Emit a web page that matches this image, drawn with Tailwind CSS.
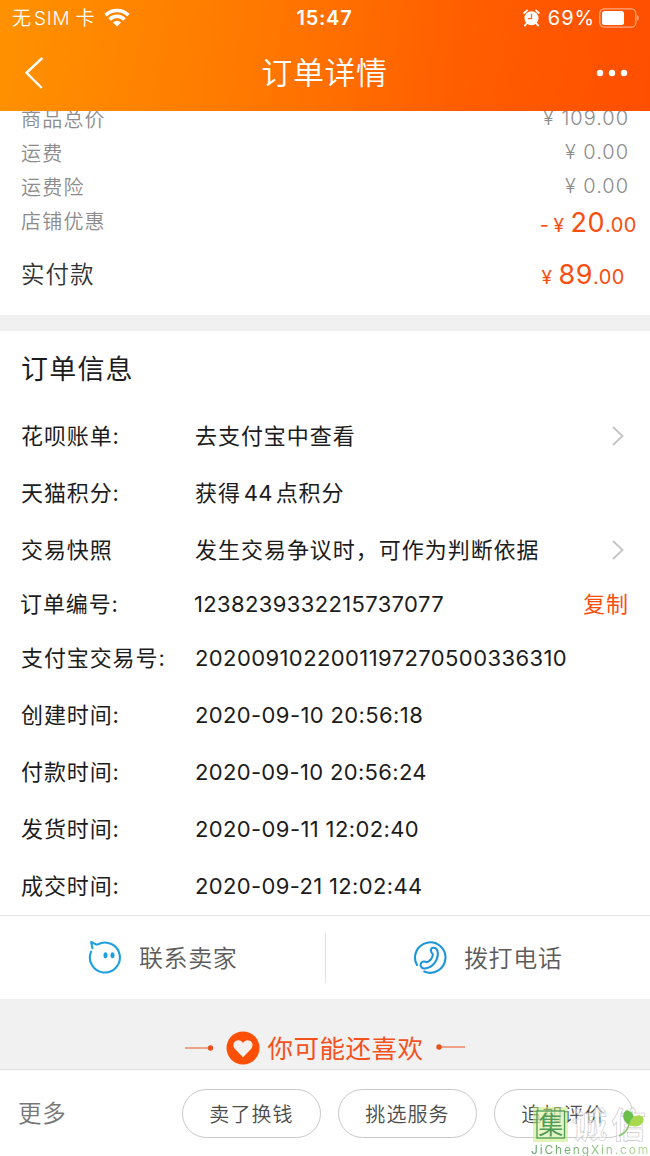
<!DOCTYPE html>
<html lang="zh-CN">
<head>
    <meta charset="UTF-8">
    <meta name="viewport" content="width=device-width, initial-scale=1.0">
    <title>订单详情</title>
    <script src="https://cdn.jsdelivr.net/npm/@tailwindcss/browser@4"></script>
</head>
<body class="bg-white font-['Inter','Noto_Sans_CJK_SC',sans-serif] text-[#1c1c1c]">
    <div class="relative flex h-[1156px] w-[650px] flex-col overflow-hidden bg-white whitespace-nowrap">
        <!-- Header -->
        <header class="h-[111px] shrink-0 bg-linear-[98deg,#ff9200_0%,#ff7400_45%,#ff5e00_70%,#ff4e00_100%] text-white">
            <div class="grid h-[35px] grid-cols-3 items-center pr-[11px] pl-3">
                <div class="flex items-center">
                    <span class="pt-[3px] text-[19px] font-[350]">无<span class="mx-[3px] tracking-[0.8px]">SIM</span><span class="ml-[2px]">卡</span></span>
                    <svg class="ml-[9px] h-[19px] w-[26px]" viewBox="0 0 26 19" fill="none" stroke="#fff" stroke-width="3.6">
                        <path d="M1.6 7.2a16.2 16.2 0 0 1 22.8 0"/>
                        <path d="M5.6 11.4a10.4 10.4 0 0 1 14.8 0"/>
                        <path d="M13 18.4l-4-4a5.7 5.7 0 0 1 8 0z" fill="#fff" stroke="none"/>
                    </svg>
                </div>
                <span class="pr-[2px] text-center text-[20px] font-semibold tracking-[0.7px]">15:47</span>
                <div class="flex items-center justify-end">
                    <svg class="mr-[8px] h-[18px] w-[17px]" viewBox="0 0 17 18">
                        <circle cx="8.5" cy="9.2" r="7" fill="#fff"/>
                        <path d="M1.2 4L4 1.4M15.800 4L13 1.4M3.600 14.500L1.800 16.600M13.400 14.500L15.200 16.600" stroke="#fff" stroke-width="1.800" stroke-linecap="round"/>
                        <path d="M8.500 4.800V9.600H5" fill="none" stroke="#ff6a1c" stroke-width="1.300"/>
                    </svg>
                    <span class="mr-[3px] text-[20px] tracking-[0.9px]">69%</span>
                    <svg class="h-5 w-[41px]" viewBox="0 0 41 20">
                        <rect x="1.800" y="0.800" width="36" height="18.400" rx="4.500" fill="none" stroke="#fff" stroke-opacity=".5" stroke-width="1.300"/>
                        <rect x="4" y="3" width="22" height="14" rx="2.500" fill="#fff"/>
                        <path d="M39.300 7v6c1.800-.8 1.800-5.200 0-6z" fill="#fff" fill-opacity=".6"/>
                    </svg>
                </div>
            </div>
            <div class="grid h-[76px] grid-cols-3 items-center pr-[22px] pl-6">
                <svg class="h-8 w-5" viewBox="0 0 20 32" fill="none" stroke="#fff" stroke-width="2.400">
                    <path d="M18.300 1L2.500 15.800L17.800 31"/>
                </svg>
                <h1 class="pr-[3px] text-center text-[31px] font-[350] tracking-[0.6px]">订单详情</h1>
                <svg class="h-2 w-8 justify-self-end" viewBox="0 0 32 8" fill="#fff">
                    <circle cx="4" cy="4" r="3.200"/>
                    <circle cx="16" cy="4" r="3.200"/>
                    <circle cx="28" cy="4" r="3.200"/>
                </svg>
            </div>
        </header>

        <!-- Price summary -->
        <section class="h-[204px] shrink-0 overflow-hidden pl-[21px] text-[20px] font-[350] text-[#8c8c8c]">
            <div class="-mt-[9px] flex h-[34px] items-center justify-between pr-[21px]">
                <span class="pt-px tracking-[1.2px]">商品总价</span>
                <span class="pb-[2px] tracking-[1px]">¥ 109.00</span>
            </div>
            <div class="flex h-[34px] items-center justify-between pr-[21px]">
                <span class="pt-px tracking-[1.2px]">运费</span>
                <span class="pb-[2px] tracking-[1px]">¥ 0.00</span>
            </div>
            <div class="flex h-[34px] items-center justify-between pr-[21px]">
                <span class="pt-px tracking-[1.2px]">运费险</span>
                <span class="pb-[2px] tracking-[1px]">¥ 0.00</span>
            </div>
            <div class="flex h-[34px] items-center justify-between pr-[13px]">
                <span class="pt-px tracking-[1.2px]">店铺优惠</span>
                <span class="pt-[5px] text-[20px] font-normal tracking-[0.5px] text-[#fa4e10]">-<span class="ml-1 text-[19px]">¥</span> <span class="text-[27px]">20</span>.00</span>
            </div>
            <div class="mt-[19px] flex h-[34px] items-center justify-between pr-[25px]">
                <span class="pt-[2px] text-[23.5px] tracking-[1px] text-[#333]">实付款</span>
                <span class="pt-[2px] text-[20px] font-normal tracking-[0.5px] text-[#fa4e10]"><span class="text-[19px]">¥</span> <span class="text-[27px]">89</span>.00</span>
            </div>
        </section>

        <div class="h-4 shrink-0 bg-[#f0f0f0]"></div>

        <!-- Order info -->
        <section class="h-[584px] shrink-0 pl-[21px] text-[22px]">
            <h2 class="flex h-[77px] items-center pt-px text-[27px] tracking-[1.2px]">订单信息</h2>
            <div class="flex h-[57px] items-center">
                <span class="w-[174px] tracking-[0.9px]">花呗账单:</span>
                <span class="flex-1 tracking-[0.95px]">去支付宝中查看</span>
                <svg class="mr-[26px] mb-[2px] h-5 w-3" viewBox="0 0 12 20" fill="none" stroke="#c4c4c4" stroke-width="1.800">
                    <path d="M1 1L10.500 10L1 19"/>
                </svg>
            </div>
            <div class="flex h-[57px] items-center">
                <span class="w-[174px] tracking-[0.9px]">天猫积分:</span>
                <span class="tracking-[0.9px]">获得<span class="mx-[3px] tracking-[0.2px]">44</span>点积分</span>
            </div>
            <div class="flex h-[57px] items-center">
                <span class="w-[174px] tracking-[0.9px]">交易快照</span>
                <span class="flex-1 tracking-[0.97px]">发生交易争议时，可作为判断依据</span>
                <svg class="mr-[26px] mb-[2px] h-5 w-3" viewBox="0 0 12 20" fill="none" stroke="#c4c4c4" stroke-width="1.800">
                    <path d="M1 1L10.500 10L1 19"/>
                </svg>
            </div>
            <div class="-ml-px flex h-[51px] items-center">
                <span class="w-[174px] tracking-[0.9px]">订单编号:</span>
                <span class="flex-1 tracking-[0.36px]">1238239332215737077</span>
                <span class="mr-[21px] tracking-[0.9px] text-[#fa4e10]">复制</span>
            </div>
            <div class="flex h-[57px] items-center">
                <span class="w-[174px] tracking-[0.9px]">支付宝交易号:</span>
                <span class="tracking-[0.4px]">2020091022001197270500336310</span>
            </div>
            <div class="flex h-[57px] items-center">
                <span class="w-[174px] tracking-[0.9px]">创建时间:</span>
                <span class="tracking-[0.38px]">2020-09-10 20:56:18</span>
            </div>
            <div class="flex h-[57px] items-center">
                <span class="w-[174px] tracking-[0.9px]">付款时间:</span>
                <span class="tracking-[0.33px]">2020-09-10 20:56:24</span>
            </div>
            <div class="flex h-[57px] items-center">
                <span class="w-[174px] tracking-[0.9px]">发货时间:</span>
                <span class="tracking-[0.38px]">2020-09-11 12:02:40</span>
            </div>
            <div class="flex h-[57px] items-center">
                <span class="w-[174px] tracking-[0.9px]">成交时间:</span>
                <span class="tracking-[0.35px]">2020-09-21 12:02:44</span>
            </div>
        </section>

        <!-- Contact -->
        <section class="flex h-[84px] shrink-0 items-center border-t border-[#e2e2e2] text-[24px] text-[#5c5c5c]">
            <div class="flex flex-1 items-center pl-[88px]">
                <svg class="mb-[2px] h-[34px] w-[34px]" viewBox="0 0 34 34" fill="none" stroke="#1e9fe0" stroke-width="2.100" stroke-linecap="round" stroke-linejoin="round">
                    <path d="M3.100 11.600A15 15 0 1 0 10 4.200L8.500 4.600L3.100 2L4.500 8.200"/>
                    <ellipse cx="17.500" cy="15.300" rx="2" ry="3" fill="#1e9fe0" stroke="none"/>
                    <ellipse cx="24.500" cy="15.300" rx="2" ry="3" fill="#1e9fe0" stroke="none"/>
                </svg>
                <span class="ml-[17px] pt-[2px] font-[350] tracking-[0.6px]">联系卖家</span>
            </div>
            <div class="h-[50px] w-px bg-[#e2e2e2]"></div>
            <div class="flex flex-1 items-center pl-[87px]">
                <svg class="mb-[2px] h-[34px] w-[34px]" viewBox="0 0 34 34" fill="none" stroke="#1e95d8" stroke-width="2.100" stroke-linecap="round" stroke-linejoin="round">
                    <path d="M4 25A15.200 15.200 0 1 1 11.200 31.500"/>
                    <path d="M17.900 10.300C17.500 7.300 22.600 6.500 24.200 10C26.400 16.600 22.100 26.500 13.100 28.300C9.100 29.200 6.900 26.500 7.800 23.700C8.800 21 12 21.200 13.900 22.200C16.800 21 19.400 18.300 19.900 14.300C18.700 13.500 18.100 12.200 17.900 10.300Z"/>
                </svg>
                <span class="ml-[17px] pt-[2px] font-[350] tracking-[0.6px]">拨打电话</span>
            </div>
        </section>

        <!-- Recommendations -->
        <section class="flex h-[70px] shrink-0 items-center justify-center bg-[#f1f1f1] pt-[27px]">
            <svg class="h-2 w-[30px]" viewBox="0 0 30 8" fill="#e8501e">
                <path d="M1 3.500h26v1H1z"/>
                <circle cx="26.500" cy="4" r="2.700"/>
            </svg>
            <svg class="ml-3 h-[34px] w-[34px]" viewBox="0 0 34 34">
                <circle cx="17" cy="17" r="16.500" fill="#ff4f05"/>
                <path d="M17 26.200L9 18C6.500 15.300 7.200 11.500 9.600 10C12.500 8.200 15.500 9.400 17 12C18.500 9.400 21.500 8.200 24.400 10C26.800 11.500 27.500 15.300 25 18Z" fill="#f6f1ee"/>
            </svg>
            <span class="ml-[7px] pt-[3px] text-[25.500px] tracking-[0.5px] text-[#f4511e]">你可能还喜欢</span>
            <svg class="ml-[12px] h-2 w-[30px]" viewBox="0 0 30 8" fill="#e8501e">
                <path d="M3 2.500h26v1H3z"/>
                <circle cx="3" cy="3" r="2.700"/>
            </svg>
        </section>

        <!-- Action bar -->
        <footer class="flex h-[87px] shrink-0 items-center border-t border-[#dedede] pr-[17px] pl-[18px] text-[20px] text-[#4c4c4c]">
            <span class="flex-1 pt-[2px] text-[23.500px] font-[350] tracking-[0.7px] text-[#777]">更多</span>
            <div class="flex gap-[17px]">
                <button class="h-[49px] w-[139px] rounded-full border border-[#c8c8c8] pt-[3px] font-[350] tracking-[1.1px]">卖了换钱</button>
                <button class="h-[49px] w-[139px] rounded-full border border-[#c8c8c8] pt-[3px] font-[350] tracking-[1.1px]">挑选服务</button>
                <button class="h-[49px] w-[139px] rounded-full border border-[#c8c8c8] pt-[3px] font-[350] tracking-[1.1px]">追加评价</button>
            </div>
        </footer>

        <!-- Site watermark -->
        <div class="absolute top-[1107px] left-[531px] w-[119px]">
            <svg class="block h-[36px] w-[119px]" viewBox="0 0 119 36">
                <path d="M2 0H37V35H2Z" fill="#c5eb7a" fill-opacity=".55"/>
                <rect x="6" y="4" width="27.500" height="27" fill="#eefad4" fill-opacity=".5" stroke="#4f9b58" stroke-width="1.300"/>
                <text x="19.700" y="26.500" text-anchor="middle" font-size="25" font-family="Noto Sans CJK SC, sans-serif" fill="#4f9b58">集</text>
                <text x="41" y="30.500" font-size="35" letter-spacing="4" font-weight="bold" font-family="Noto Sans CJK SC, sans-serif" fill="#fff" fill-opacity=".5" stroke="#c8c8c8" stroke-width=".6">诚信</text>
                <path d="M98 18C90 13 91 5 96 3C102 5 106 10 98 18Z" fill="#6abf4b"/>
                <path d="M98 18C100 9 107 6 112 10C115 17 106 22 98 18Z" fill="#a8d84e"/>
                <path d="M98 17Q96 26 88 29" fill="none" stroke="#8cc96a" stroke-width="1.400"/>
            </svg>
            <p class="bg-linear-to-r from-[#5a9d63] to-[#b5dd92] bg-clip-text text-[12px] leading-[13px] tracking-[1.850px] text-transparent">JiChengXin.com</p>
        </div>
    </div>
</body>
</html>
